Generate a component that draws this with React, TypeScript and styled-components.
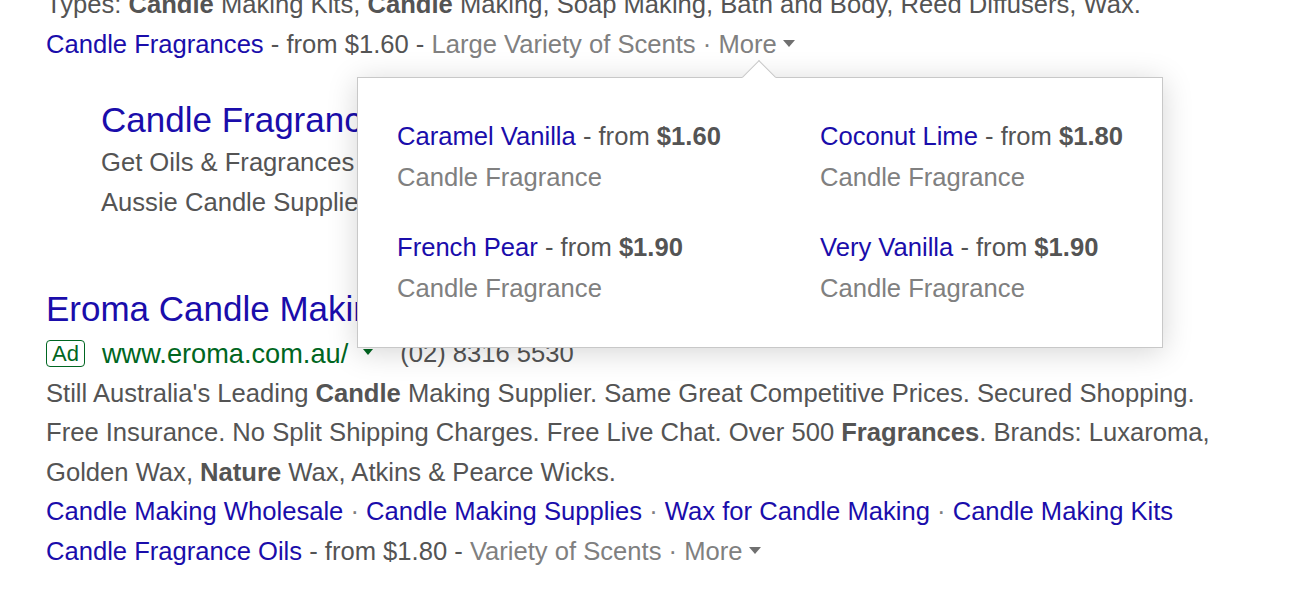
import React from "react";
import styled, { createGlobalStyle } from "styled-components";

const GlobalStyle = createGlobalStyle`
  html, body { margin: 0; padding: 0; background: #fff; overflow: hidden; }
  body { font-family: "Liberation Sans", Arial, sans-serif; }
`;

const Page = styled.div`
  position: relative;
  margin-top: -15px;
  padding-left: 46px;
  width: 1244px;
  height: 620px;
`;

const Line = styled.div<{ $mt?: number }>`
  font-size: 25.6px;
  line-height: 39.5px;
  color: #545454;
  white-space: nowrap;
  margin-top: ${(p) => p.$mt ?? 0}px;
`;

const Title = styled.div<{ $mt: number }>`
  font-size: 35px;
  line-height: 36px;
  color: #1a0dab;
  white-space: nowrap;
  margin-top: ${(p) => p.$mt}px;
`;

const Indented = styled.div`
  margin-left: 55px;
`;

const Link = styled.span`
  color: #1a0dab;
`;

const Dim = styled.span`
  color: #808080;
`;

const B = styled.b`
  font-weight: bold;
`;

const Caret = styled.span<{ $color: string; $w: number; $h: number; $ml: number }>`
  display: inline-block;
  width: 0;
  height: 0;
  border-left: ${(p) => p.$w / 2}px solid transparent;
  border-right: ${(p) => p.$w / 2}px solid transparent;
  border-top: ${(p) => p.$h}px solid ${(p) => p.$color};
  margin-left: ${(p) => p.$ml}px;
  vertical-align: middle;
  position: relative;
  top: -2px;
`;

const AdRow = styled.div`
  display: flex;
  align-items: center;
  height: 39.5px;
  margin-top: 7px;
  font-size: 25.6px;
  white-space: nowrap;
`;

const AdBadge = styled.span`
  display: inline-flex;
  align-items: center;
  box-sizing: border-box;
  height: 27px;
  padding: 0 5px;
  border: 1.5px solid #006621;
  border-radius: 4px;
  color: #006621;
  font-size: 22px;
  margin-right: 17px;
`;

const Url = styled.span`
  color: #006621;
  font-size: 27.2px;
`;

const Phone = styled.span`
  color: #545454;
  margin-left: 27px;
`;

const Popup = styled.div`
  position: absolute;
  top: 92px;
  left: 357px;
  width: 806px;
  height: 271px;
  box-sizing: border-box;
  background: #fff;
  border: 1px solid #c8c8c8;
  box-shadow: 0 4px 28px rgba(0, 0, 0, 0.17);
  padding: 38px 39px;
  display: grid;
  grid-template-columns: 423px 1fr;
  row-gap: 29px;
  align-content: start;

  &::before {
    content: "";
    position: absolute;
    top: -13px;
    left: 389px;
    width: 24px;
    height: 24px;
    box-sizing: border-box;
    background: #fff;
    border-top: 1px solid #c8c8c8;
    border-left: 1px solid #c8c8c8;
    transform: rotate(45deg);
  }
`;

const Item = styled.div`
  font-size: 25.6px;
  white-space: nowrap;
`;

const ItemTitle = styled.div`
  line-height: 40px;
  color: #545454;
`;

const ItemSub = styled.div`
  line-height: 42px;
  color: #808080;
`;

const Sep = () => <Dim> · </Dim>;

const items = [
  { name: "Caramel Vanilla", price: "$1.60" },
  { name: "Coconut Lime", price: "$1.80" },
  { name: "French Pear", price: "$1.90" },
  { name: "Very Vanilla", price: "$1.90" },
];

export default function App() {
  return (
    <>
      <GlobalStyle />
      <Page>
        <Line>
          Types: <B>Candle</B> Making Kits, <B>Candle</B> Making, Soap Making, Bath and Body, Reed Diffusers, Wax.
        </Line>
        <Line>
          <Link>Candle Fragrances</Link> - from $1.60 - <Dim>Large Variety of Scents</Dim>
          <Sep />
          <Dim>More</Dim>
          <Caret $color="#707070" $w={12} $h={7} $ml={6} />
        </Line>
        <Indented>
          <Title $mt={38}>Candle Fragrances Oils</Title>
          <Line $mt={5}>Get Oils &amp; Fragrances Online Today</Line>
          <Line>Aussie Candle Supplies</Line>
        </Indented>
        <Title $mt={69}>Eroma Candle Making Supplies</Title>
        <AdRow>
          <AdBadge>Ad</AdBadge>
          <Url>www.eroma.com.au/</Url>
          <Caret $color="#006621" $w={10} $h={6} $ml={15} />
          <Phone>(02) 8316 5530</Phone>
        </AdRow>
        <Line>
          Still Australia's Leading <B>Candle</B> Making Supplier. Same Great Competitive Prices. Secured Shopping.
        </Line>
        <Line>
          Free Insurance. No Split Shipping Charges. Free Live Chat. Over 500 <B>Fragrances</B>. Brands: Luxaroma,
        </Line>
        <Line>
          Golden Wax, <B>Nature</B> Wax, Atkins &amp; Pearce Wicks.
        </Line>
        <Line>
          <Link>Candle Making Wholesale</Link>
          <Sep />
          <Link>Candle Making Supplies</Link>
          <Sep />
          <Link>Wax for Candle Making</Link>
          <Sep />
          <Link>Candle Making Kits</Link>
        </Line>
        <Line>
          <Link>Candle Fragrance Oils</Link> - from $1.80 - <Dim>Variety of Scents</Dim>
          <Sep />
          <Dim>More</Dim>
          <Caret $color="#707070" $w={12} $h={7} $ml={6} />
        </Line>
        <Popup>
          {items.map((it) => (
            <Item key={it.name}>
              <ItemTitle>
                <Link>{it.name}</Link> - from <B>{it.price}</B>
              </ItemTitle>
              <ItemSub>Candle Fragrance</ItemSub>
            </Item>
          ))}
        </Popup>
      </Page>
    </>
  );
}
